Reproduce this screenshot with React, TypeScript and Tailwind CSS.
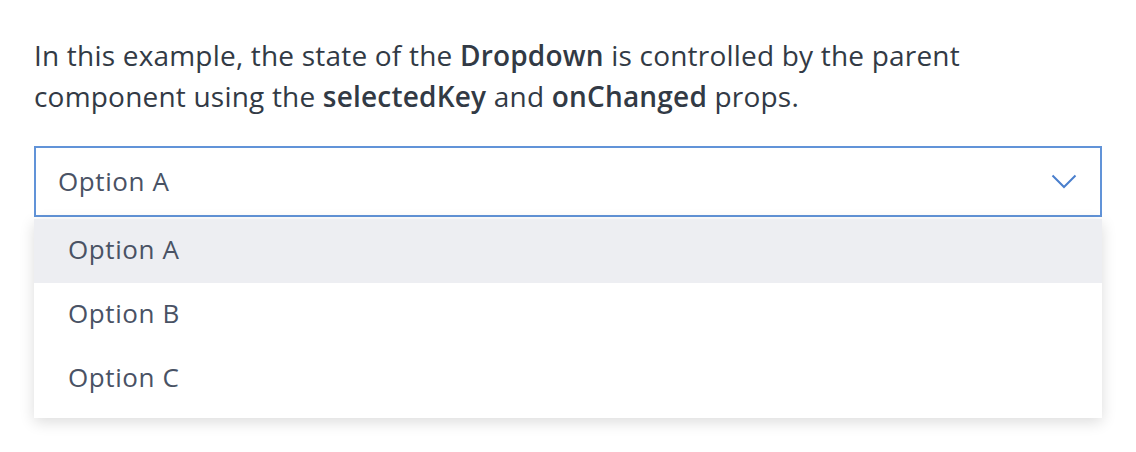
const options = ['Option A', 'Option B', 'Option C']

function Chevron() {
  return (
    <svg width="26" height="15" viewBox="0 0 26 15" fill="none" className="text-[#4a7fcd]">
      <polyline points="1.5,1.5 13,13 24.5,1.5" stroke="currentColor" strokeWidth="2" />
    </svg>
  )
}

export default function App() {
  const selected = 'Option A'

  return (
    <div
      className="w-[1136px] h-[452px] bg-white px-[34px] pt-[35px] text-[#323a45]"
      style={{ fontFamily: "'Open Sans', 'Noto Sans', sans-serif" }}
    >
      <p className="text-[28px] leading-[41px] tracking-[0.2px]">
        In this example, the state of the <b className="font-semibold">Dropdown</b> is controlled by the parent
        <br />
        component using the <b className="font-semibold">selectedKey</b> and <b className="font-semibold">onChanged</b> props.
      </p>

      <div className="mt-[29px] w-[1068px]">
        <div className="flex items-center justify-between h-[71px] border-2 border-[#6193d8] pl-[22px] pr-[23px]">
          <span className="text-[26px] tracking-[0.6px] text-[#495264]">{selected}</span>
          <Chevron />
        </div>
        <div className="mt-[2px] pb-[7px] bg-white shadow-[0_4px_14px_rgba(0,0,0,0.14)]">
          {options.map((o) => (
            <div
              key={o}
              className={`flex items-center h-[64px] pl-[34px] pb-[4px] text-[26px] tracking-[0.6px] text-[#495264] ${
                o === selected ? 'bg-[#edeef2]' : ''
              }`}
            >
              {o}
            </div>
          ))}
        </div>
      </div>
    </div>
  )
}
